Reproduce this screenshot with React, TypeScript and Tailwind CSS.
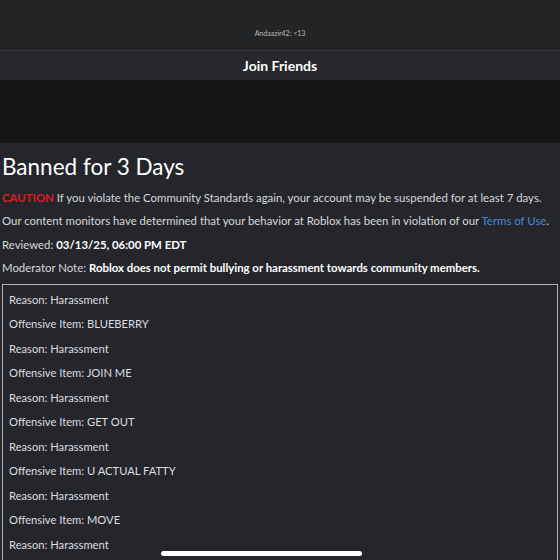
import React from "react";

const items: [string, string][] = [
  ["Reason: ", "Harassment"],
  ["Offensive Item: ", "BLUEBERRY"],
  ["Reason: ", "Harassment"],
  ["Offensive Item: ", "JOIN ME"],
  ["Reason: ", "Harassment"],
  ["Offensive Item: ", "GET OUT"],
  ["Reason: ", "Harassment"],
  ["Offensive Item: ", "U ACTUAL FATTY"],
  ["Reason: ", "Harassment"],
  ["Offensive Item: ", "MOVE"],
  ["Reason: ", "Harassment"],
];

export default function App() {
  return (
    <div
      className="w-[560px] h-[560px] overflow-hidden bg-[#25262c] relative"
      style={{ fontFamily: 'Lato, "Noto Sans", sans-serif' }}
    >
      <div className="h-[50px] bg-[#232426] flex items-end justify-center pb-[13px]">
        <span className="text-[7px] text-[#b8b9bb] leading-none">Andaazir42: &lt;13</span>
      </div>
      <div className="h-px bg-[#3a3b3e]" />
      <div className="h-[29px] bg-[#27282b] flex items-center justify-center">
        <span className="text-[14px] font-bold text-white leading-none">Join Friends</span>
      </div>
      <div className="h-[63px] bg-[#141517]" />
      <div className="px-[2px] pt-[10px]">
        <h1 className="text-[22.5px] leading-[28px] text-white font-normal">Banned for 3 Days</h1>
        <div className="text-[11.4px] text-[#d7d8da] mt-[9px] flex flex-col gap-[7.3px] leading-[16px] whitespace-nowrap">
          <p>
            <span className="text-[#e0191d] font-bold">CAUTION</span> If you violate the Community
            Standards again, your account may be suspended for at least 7 days.
          </p>
          <p>
            Our content monitors have determined that your behavior at Roblox has been in violation
            of our <span className="text-[#4f84d6]">Terms of Use</span>.
          </p>
          <p>
            Reviewed: <span className="font-bold text-white">03/13/25, 06:00 PM EDT</span>
          </p>
          <p>
            Moderator Note:{" "}
            <span className="font-bold text-white">
              Roblox does not permit bullying or harassment towards community members.
            </span>
          </p>
        </div>
        <div className="mt-[8px] border border-[#b3b4b8] h-[400px] px-[6px] pt-[7px] flex flex-col">
          {items.map(([a, b], i) => (
            <div key={i} className="h-[24.5px] shrink-0 leading-[15px] text-[11.2px] text-[#dcdde0]">
              {a}
              {b}
            </div>
          ))}
        </div>
      </div>
      <div className="absolute left-[161px] top-[551px] w-[201px] h-[5px] rounded-full bg-white" />
    </div>
  );
}
